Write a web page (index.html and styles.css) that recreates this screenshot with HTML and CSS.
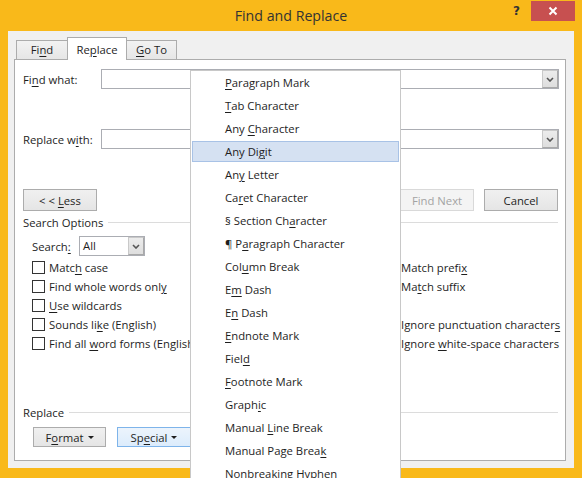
FILE: index.html
```html
<!DOCTYPE html>
<html>
<head>
<meta charset="utf-8">
<title>Find and Replace</title>
<link rel="stylesheet" href="styles.css">
</head>
<body>
<div class="window">
  <div class="titlebar">
    <div></div>
    <div class="title">Find and Replace</div>
    <div class="controls">
      <span class="help">?</span>
      <span class="close"><svg width="10" height="10" viewBox="0 0 10 10"><path d="M1.5 1.5 L8.5 8.5 M8.5 1.5 L1.5 8.5" stroke="#fff" stroke-width="2" fill="none"/></svg></span>
    </div>
  </div>
  <div class="body">
    <div class="tabs">
      <div class="tab tab-find"><span>Fi<u>n</u>d</span></div>
      <div class="tab active"><span>Re<u>p</u>lace</span></div>
      <div class="tab tab-goto"><span><u>G</u>o To</span></div>
    </div>
    <div class="panel">
      <div class="field-row">
        <span class="field-label">Fi<u>n</u>d what:</span>
        <div class="combo"><span class="combo-btn"><svg width="8" height="5" viewBox="0 0 8 5"><path d="M1 1 L4 4 L7 1" stroke="#555" stroke-width="1.6" fill="none"/></svg></span></div>
      </div>
      <div class="field-row gap-row">
        <span class="field-label">Replace w<u>i</u>th:</span>
        <div class="combo"><span class="combo-btn"><svg width="8" height="5" viewBox="0 0 8 5"><path d="M1 1 L4 4 L7 1" stroke="#555" stroke-width="1.6" fill="none"/></svg></span></div>
      </div>
      <div class="button-row">
        <button class="btn"><span>&lt; &lt; <u>L</u>ess</span></button>
        <div class="spacer"></div>
        <button class="btn disabled"><span>Find Next</span></button>
        <button class="btn"><span>Cancel</span></button>
      </div>
      <div class="group-head"><span>Search Options</span><span class="rule"></span></div>
      <div class="search-row">
        <span class="search-label">Search<u>:</u></span>
        <div class="select"><span class="select-text">All</span><span class="combo-btn"><svg width="8" height="5" viewBox="0 0 8 5"><path d="M1 1 L4 4 L7 1" stroke="#555" stroke-width="1.6" fill="none"/></svg></span></div>
      </div>
      <div class="options">
        <div class="check"><span class="box"></span><span>Matc<u>h</u> case</span></div>
        <div class="check"><span class="box"></span><span>Find whole words onl<u>y</u></span></div>
        <div class="check"><span class="box"></span><span><u>U</u>se wildcards</span></div>
        <div class="check"><span class="box"></span><span>Sounds li<u>k</u>e (English)</span></div>
        <div class="check"><span class="box"></span><span>Find all <u>w</u>ord forms (English)</span></div>
        <div class="check"><span class="box"></span><span>Match prefi<u>x</u></span></div>
        <div class="check"><span class="box"></span><span>Ma<u>t</u>ch suffix</span></div>
        <div class="check"></div>
        <div class="check"><span class="box"></span><span>Ignore punctuation character<u>s</u></span></div>
        <div class="check"><span class="box"></span><span>Ignore <u>w</u>hite-space characters</span></div>
      </div>
      <div class="group-head replace-head"><span>Replace</span><span class="rule"></span></div>
      <div class="bottom-buttons">
        <button class="btn small fmt"><span>F<u>o</u>rmat</span><span class="caret"></span></button>
        <button class="btn small hot"><span>Sp<u>e</u>cial</span><span class="caret"></span></button>
      </div>
    </div>
  </div>
  <div class="menu">
    <div class="menu-item"><u>P</u>aragraph Mark</div>
    <div class="menu-item"><u>T</u>ab Character</div>
    <div class="menu-item">Any <u>C</u>haracter</div>
    <div class="menu-item hl">Any Di<u>g</u>it</div>
    <div class="menu-item">An<u>y</u> Letter</div>
    <div class="menu-item">Ca<u>r</u>et Character</div>
    <div class="menu-item">§ Section Ch<u>a</u>racter</div>
    <div class="menu-item">¶ P<u>a</u>ragraph Character</div>
    <div class="menu-item">Col<u>u</u>mn Break</div>
    <div class="menu-item">E<u>m</u> Dash</div>
    <div class="menu-item">E<u>n</u> Dash</div>
    <div class="menu-item"><u>E</u>ndnote Mark</div>
    <div class="menu-item">Fiel<u>d</u></div>
    <div class="menu-item"><u>F</u>ootnote Mark</div>
    <div class="menu-item">Graph<u>i</u>c</div>
    <div class="menu-item">Manual <u>L</u>ine Break</div>
    <div class="menu-item">Manual Page Brea<u>k</u></div>
    <div class="menu-item">Nonbreaking <u>H</u>yphen</div>
  </div>
</div>
</body>
</html>
```

FILE: styles.css
```css
body {
  margin: 0;
  background: #f9b91a;
  font-family: "Open Sans", "Noto Sans", sans-serif;
  font-size: 11.3px;
  color: #1e1e1e;
}

u {
  text-decoration-thickness: 1px;
  text-underline-offset: 2px;
}

.window {
  width: 582px;
  height: 478px;
  position: relative;
  overflow: hidden;
  display: flex;
  flex-direction: column;
  background: #f9b91a;
}

.titlebar {
  flex: none;
  height: 31px;
  display: grid;
  grid-template-columns: 1fr auto 1fr;
}

.title {
  font-size: 14.2px;
  line-height: 31px;
  color: #333;
  white-space: nowrap;
}

.controls {
  display: flex;
  justify-content: flex-end;
  align-items: flex-start;
  padding: 1px 7px 0 0;
}

.help {
  font-family: "DejaVu Sans", sans-serif;
  font-weight: bold;
  font-size: 12px;
  line-height: 20px;
  color: #333;
  margin-right: 11px;
}

.close {
  width: 44px;
  height: 20px;
  background: #c75050;
  display: flex;
  align-items: center;
  justify-content: center;
}

.body {
  flex: 1;
  margin: 0 8px 10px 8px;
  background: #f0f0f0;
  padding: 6px 8px 7px 6px;
  display: flex;
  flex-direction: column;
  min-height: 0;
}

.tabs {
  display: flex;
  align-items: flex-end;
  height: 22px;
  margin-left: 2px;
  flex: none;
}

.tab {
  height: 19px;
  box-sizing: border-box;
  border: 1px solid #acacac;
  border-bottom: none;
  background: linear-gradient(#f2f2f2, #e6e6e6);
  display: flex;
  align-items: center;
  justify-content: center;
  line-height: 16px;
  white-space: nowrap;
}

.tab-find {
  width: 51px;
  border-right: none;
}

.tab.active {
  width: 60px;
  height: 23px;
  margin-bottom: -1px;
  background: #fff;
  position: relative;
  z-index: 1;
  padding-top: 1px;
}

.tab-goto {
  width: 50px;
  border-left: none;
}

.panel {
  flex: 1;
  background: #fff;
  border: 1px solid #acacac;
  padding: 9px 6px 0 8px;
  display: flex;
  flex-direction: column;
}

.field-row {
  display: flex;
  align-items: center;
  height: 20px;
}

.gap-row {
  margin-top: 40px;
}

.field-label {
  width: 78px;
  flex: none;
}

.combo {
  flex: 1;
  height: 20px;
  box-sizing: border-box;
  border: 1px solid #abadb3;
  display: flex;
  justify-content: flex-end;
}

.combo-btn {
  width: 16px;
  box-sizing: border-box;
  background: linear-gradient(#ececec, #dedede);
  border: 1px solid #c9c9c9;
  border-right-color: #a9a9a9;
  border-bottom-color: #a9a9a9;
  display: flex;
  align-items: center;
  justify-content: center;
}

.button-row {
  display: flex;
  gap: 10px;
  margin-top: 40px;
  margin-right: 1px;
}

.spacer {
  flex: 1;
}

.btn {
  height: 22px;
  width: 74px;
  box-sizing: border-box;
  border: 1px solid #acacac;
  background: linear-gradient(#f0f0f0, #e5e5e5);
  font: inherit;
  color: inherit;
  padding: 0;
  display: flex;
  align-items: center;
  justify-content: center;
  white-space: pre;
}

.btn.disabled {
  color: #a3a3a3;
  background: #f4f4f4;
  border-color: #d9d9d9;
}

.group-head {
  display: flex;
  align-items: center;
  height: 16px;
  margin-top: 3px;
}

.group-head .rule {
  flex: 1;
  height: 1px;
  background: #dcdcdc;
  margin-left: 5px;
  margin-right: 1px;
}

.search-row {
  display: flex;
  align-items: center;
  height: 20px;
  margin-top: 6px;
  padding-left: 9px;
}

.search-label {
  width: 47px;
}

.select {
  width: 66px;
  height: 20px;
  box-sizing: border-box;
  border: 1px solid #abadb3;
  display: flex;
}

.select-text {
  flex: 1;
  padding-left: 3px;
  line-height: 18px;
}

.options {
  display: grid;
  grid-template-columns: 352px 1fr;
  grid-template-rows: repeat(5, 19px);
  grid-auto-flow: column;
  margin-top: 2px;
  padding-left: 9px;
}

.check {
  display: flex;
  align-items: center;
  white-space: nowrap;
}

.box {
  width: 13px;
  height: 13px;
  box-sizing: border-box;
  border: 1px solid #333;
  background: #fff;
  margin-right: 4px;
  flex: none;
}

.replace-head {
  margin-top: 51px;
}

.bottom-buttons {
  display: flex;
  gap: 11px;
  margin-top: 7px;
  padding-left: 10px;
}

.btn.small {
  height: 20px;
}

.btn.fmt {
  width: 73px;
}

.btn.hot {
  background: linear-gradient(#ecf4fc, #dcecfc);
  border-color: #7eb4ea;
}

.caret {
  display: inline-block;
  border-left: 3px solid transparent;
  border-right: 3px solid transparent;
  border-top: 3px solid #1e1e1e;
  margin-left: 4px;
}

.menu {
  position: absolute;
  left: 190px;
  top: 70px;
  width: 211px;
  height: 420px;
  box-sizing: border-box;
  border: 1px solid #c8c8c8;
  background: #fff;
  z-index: 5;
}

.menu-item {
  height: 23px;
  line-height: 23px;
  padding-left: 34px;
  white-space: nowrap;
}

.menu-item.hl {
  height: 21px;
  margin: 1px;
  box-sizing: border-box;
  line-height: 19px;
  padding-left: 32px;
  background: #d5e1f2;
  border: 1px solid #a8c2e6;
}
```
